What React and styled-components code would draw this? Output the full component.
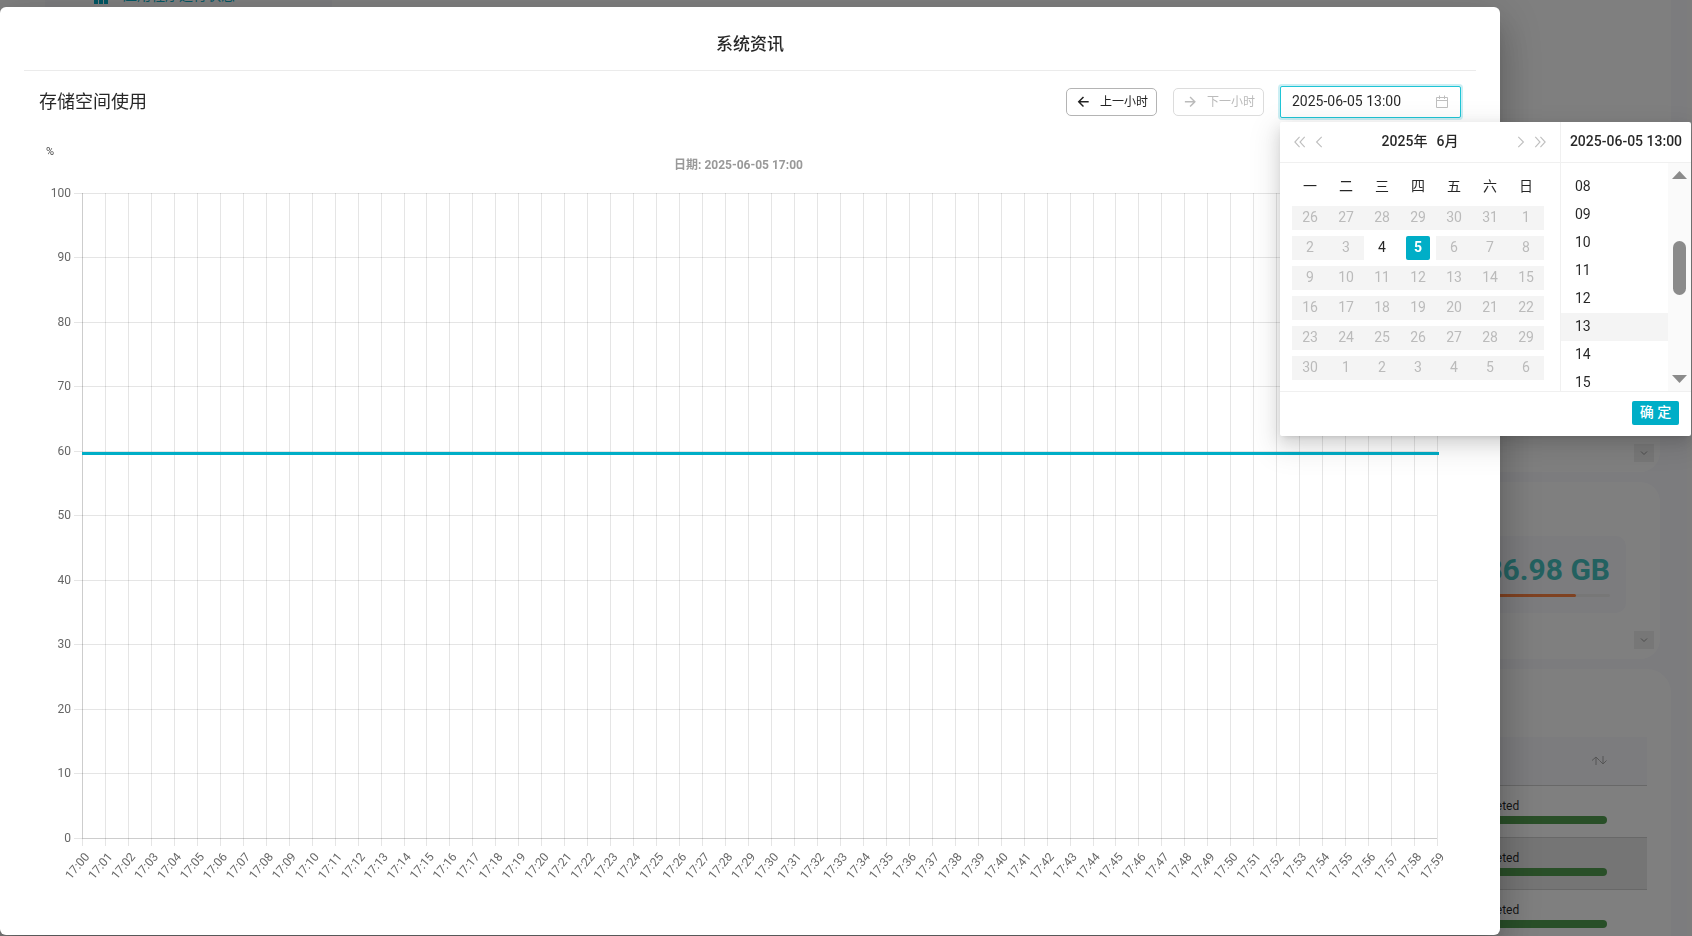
import React, { useLayoutEffect, useRef, useState } from 'react';
import styled, { createGlobalStyle, css } from 'styled-components';

const teal = '#00aec7';
const fontFamily = 'Roboto, "Noto Sans CJK SC", sans-serif';

const GlobalStyle = createGlobalStyle`
  *, *::before, *::after {
    box-sizing: border-box;
  }
  body {
    margin: 0;
    overflow: hidden;
    font-family: ${fontFamily};
    font-size: 14px;
    color: rgba(0, 0, 0, 0.85);
  }
  button, input {
    font-family: inherit;
    margin: 0;
  }
`;

/* ---------- dashboard behind the dialog ---------- */

const Page = styled.div`
  display: flex;
  height: 100vh;
  overflow: hidden;
  background: #f8f8fd;
`;

const Rail = styled.nav`
  flex: 0 0 45px;
  margin-right: 15px;
  background: #fff;
`;

const Menu = styled.aside`
  flex: 0 0 260px;
  margin-right: 12px;
  background: #fff;
`;

const MenuLink = styled.a`
  display: flex;
  align-items: center;
  gap: 15px;
  height: 24px;
  margin-top: -18px;
  padding-left: 34px;
  color: ${teal};
  text-decoration: none;
`;

const Main = styled.main`
  flex: 1;
  display: flex;
  flex-direction: column;
  gap: 10px;
  margin-right: 16px;
`;

const Gutter = styled.div`
  flex: 0 0 5px;
  background: #fafafa;
`;

const Summary = styled.section`
  flex: 0 0 300px;
  background: #fff;
`;

const Card = styled.section`
  flex: 0 0 auto;
  display: flex;
  flex-direction: column;
  align-items: flex-end;
  justify-content: flex-end;
  height: ${props => props.height}px;
  margin-right: 11px;
  padding: 0 6px 10px 0;
  border-radius: 20px;
  background: #fff;
`;

const ExpandButton = styled.button`
  display: flex;
  align-items: center;
  justify-content: center;
  width: 20px;
  height: 18px;
  padding: 0;
  border: 0;
  background: #efefef;
  color: #999;
`;

const Stat = styled.div`
  width: 260px;
  height: 77px;
  margin: 0 28px 18px 0;
  padding: 16px 16px 0;
  border-radius: 10px;
  background: #f8f8fd;
  text-align: right;
`;

const StatValue = styled.div`
  font-size: 30px;
  line-height: 36px;
  font-weight: 700;
  color: #47c2c0;
`;

const StatTrack = styled.div`
  height: 3px;
  margin-top: 6px;
  border-radius: 2px;
  background: #eee;
`;

const StatFill = styled.div`
  height: 3px;
  border-radius: 2px;
  background: #ff8443;
`;

const TableCard = styled.section`
  flex: 1 0 auto;
  display: flex;
  justify-content: flex-end;
  align-items: flex-start;
  padding: 68px 24px 0;
  border-radius: 24px 24px 0 0;
  background: #fff;
`;

const Table = styled.table`
  width: 100%;
  border-collapse: collapse;
  font-size: 12px;

  th {
    height: 48px;
    padding: 0 40px 0 0;
    text-align: right;
    color: #aaa;
    background: #f8f8fd;
    border-bottom: 1px solid #d0d0d0;
  }
  td {
    height: 52px;
    padding: 0 40px 0 0;
    border-bottom: 1px solid #d0d0d0;
    vertical-align: middle;
  }
  tr:nth-child(even) td {
    background: #ebebeb;
  }
`;

const Status = styled.div`
  width: 146px;
  margin-left: auto;
  line-height: 16px;
`;

const StatusBar = styled.div`
  height: 8px;
  margin-top: 2px;
  border-radius: 4px;
  background: #539e50;
`;

/* ---------- dialog ---------- */

const Overlay = styled.div`
  position: fixed;
  inset: 0;
  padding: 7px 192px 1px 0;
  background: rgba(0, 0, 0, 0.5);
`;

const Dialog = styled.div`
  padding: 0 24px 29px;
  border-radius: 6px;
  background: #fff;
  box-shadow: 0 11px 15px -7px rgba(0, 0, 0, 0.2), 0 24px 38px 3px rgba(0, 0, 0, 0.14),
    0 9px 46px 8px rgba(0, 0, 0, 0.12);
`;

const DialogTitle = styled.h2`
  margin: 0;
  padding: 25px 0 14px;
  border-bottom: 1px solid #ebebeb;
  font-size: 17px;
  line-height: 24px;
  font-weight: 500;
  text-align: center;
`;

const Toolbar = styled.div`
  display: flex;
  align-items: center;
  gap: 16px;
  padding: 15px 15px 0;
`;

const SectionTitle = styled.h3`
  flex: 1;
  margin: 0;
  font-size: 18px;
  line-height: 24px;
  font-weight: 400;
`;

const HourButton = styled.button`
  display: flex;
  align-items: center;
  gap: 10px;
  height: 28px;
  width: 91px;
  padding: 0 8px 3px 10px;
  border: 1px solid #b4b4b4;
  border-radius: 5px;
  background: #fff;
  color: #222;
  font-size: 12px;
  white-space: nowrap;

  &:disabled {
    border-color: #dcdcdc;
    color: #bbb;
  }
`;

const PickerWrap = styled.div`
  position: relative;
`;

const PickerField = styled.label`
  display: flex;
  align-items: center;
  width: 181px;
  height: 32px;
  padding: 0 11px;
  border: 1px solid #1fc5d6;
  border-radius: 2px;
  box-shadow: 0 0 0 2px rgba(0, 174, 199, 0.2);
  background: #fff;
  color: #bfbfbf;
`;

const PickerInput = styled.input`
  flex: 1;
  min-width: 0;
  padding: 0 0 2px;
  border: 0;
  outline: 0;
  background: transparent;
  color: rgba(0, 0, 0, 0.85);
  font-size: 14px;
`;

const Popup = styled.div`
  position: absolute;
  z-index: 2;
  top: 36px;
  left: 0;
  width: 411px;
  border-radius: 2px;
  background: #fff;
  box-shadow: 0 3px 6px -4px rgba(0, 0, 0, 0.2), 0 6px 16px rgba(0, 0, 0, 0.12),
    0 9px 28px 8px rgba(0, 0, 0, 0.08);
`;

const Panels = styled.div`
  display: flex;
  border-bottom: 1px solid #f0f0f0;
`;

const DatePanel = styled.div`
  width: 281px;
  border-right: 1px solid #f0f0f0;
`;

const PanelHeader = styled.div`
  display: flex;
  align-items: center;
  height: 41px;
  padding: 0 8px;
  border-bottom: 1px solid #f0f0f0;
  font-weight: 500;
  line-height: 38px;
  white-space: nowrap;
`;

const PanelTitle = styled.div`
  flex: 1;
  display: flex;
  justify-content: center;
  gap: 9px;
  padding-bottom: 3px;
`;

const NavButton = styled.button`
  display: flex;
  align-items: center;
  justify-content: center;
  width: 16px;
  height: 38px;
  padding: 0;
  border: 0;
  background: transparent;
  color: #bfbfbf;

  ${props => props.wide && css`
    width: 24px;
  `}
`;

const Calendar = styled.table`
  width: 252px;
  margin: 8px 16px 8px 12px;
  border-collapse: collapse;
  table-layout: fixed;
  text-align: center;

  th {
    height: 32px;
    padding: 0 0 4px;
    font-weight: 400;
  }
  td {
    height: 30px;
    padding: 3px 0;
  }
`;

const Day = styled.button`
  display: block;
  width: 100%;
  height: 24px;
  padding: 0 0 1px;
  border: 0;
  background: #fff;
  color: rgba(0, 0, 0, 0.85);
  font-size: 14px;
  line-height: 23px;

  &:disabled {
    background: #f4f4f4;
    color: #bbb;
  }
  ${props => props.selected && css`
    width: 24px;
    margin: 0 auto;
    border-radius: 2px;
    background: ${teal};
    color: #fff;
    font-weight: 700;
  `}
`;

const TimePanel = styled.div`
  flex: 1;
`;

const TimeBody = styled.div`
  display: flex;
  height: 228px;
`;

const TimeList = styled.ul`
  flex: 1;
  margin: 0;
  padding: 10px 0 0;
  list-style: none;
  overflow: hidden;
`;

const TimeButton = styled.button`
  display: block;
  width: 100%;
  height: 28px;
  padding: 0 0 1px 14px;
  border: 0;
  background: ${props => (props.selected ? '#f4f4f4' : 'transparent')};
  color: rgba(0, 0, 0, 0.85);
  font-size: 14px;
  line-height: 27px;
  text-align: left;
`;

const ScrollTrack = styled.div`
  display: flex;
  flex-direction: column;
  align-items: center;
  width: 23px;
  padding: 8px 0;
  background: #fafafa;
  color: #8b8b8b;
`;

const ScrollThumb = styled.div`
  width: 13px;
  height: 54px;
  margin: 62px 0 auto;
  border-radius: 7px;
  background: #8b8b8b;
`;

const PopupFooter = styled.div`
  display: flex;
  justify-content: flex-end;
  padding: 9px 12px 11px;
`;

const OkButton = styled.button`
  height: 24px;
  width: 47px;
  padding: 0 0 2px;
  border: 0;
  border-radius: 2px;
  background: ${teal};
  color: #fff;
  font-size: 14px;
  font-weight: 500;
  line-height: 22px;
`;

const ChartBox = styled.div`
  margin: 20px 15px 0;

  svg {
    display: block;
    width: 100%;
    height: 768px;
  }
  text {
    font-family: ${fontFamily};
    font-size: 12px;
    fill: #666;
  }
`;

/* ---------- icons ---------- */

const paths = {
  left: ['M9 1 3 7 9 13'],
  dleft: ['M6.500 1 1 7 6.500 13', 'M12.500 1 7 7 12.500 13'],
  right: ['M5 1 11 7 5 13'],
  dright: ['M1.500 1 7 7 1.500 13', 'M7.500 1 13 7 7.500 13'],
};

const Chevron = ({ kind }) => (
  <svg width="12" height="12" viewBox="0 0 14 14" fill="none" stroke="currentColor" strokeWidth="1.300">
    {paths[kind].map(d => <path key={d} d={d} />)}
  </svg>
);

const Arrow = ({ back }) => (
  <svg width="15" height="15" viewBox="0 0 15 15" fill="none" stroke="currentColor" strokeWidth="1.700">
    {back
      ? <path d="M13.500 9H2M7.500 3.500 2 9 7.500 14.500" />
      : <path d="M1 9h11.500M7 3.500 12.500 9 7 14.500" />}
  </svg>
);

const CalendarIcon = () => (
  <svg width="14" height="14" viewBox="0 0 14 14" fill="none" stroke="currentColor">
    <path d="M1.500 2.500h11v10h-11zM1.500 5.500h11M4.500 0.500v3.500M9.500 0.500v3.500" />
  </svg>
);

const Triangle = ({ down }) => (
  <svg width="15" height="8" viewBox="0 0 15 8" fill="currentColor">
    <path d={down ? 'M0 0h15L7.500 8z' : 'M0 8h15L7.500 0z'} />
  </svg>
);

const Expand = () => (
  <ExpandButton aria-label="展开">
    <svg width="8" height="8" viewBox="0 0 8 8" fill="none" stroke="currentColor">
      <path d="M1 2.500 4 5.500 7 2.500" />
    </svg>
  </ExpandButton>
);

/* ---------- chart ---------- */

const plot = { left: 43, top: 55, bottom: 700, insetRight: 24 };
const minutes = Array.from({ length: 60 }, (_, i) => `17:${String(i).padStart(2, '0')}`);
const usage = 59.6;

// keep the 1px grid lines on whole pixels
const crisp = n => Math.round(n) + 0.5;

const UsageChart = () => {
  const box = useRef(null);
  const [width, setWidth] = useState(1422);

  useLayoutEffect(() => {
    const measure = () => setWidth(box.current.clientWidth);
    measure();
    window.addEventListener('resize', measure);
    return () => window.removeEventListener('resize', measure);
  }, []);

  const right = width - plot.insetRight;
  const x = i => plot.left + (i * (right - plot.left)) / (minutes.length - 1);
  const y = v => plot.bottom - (v * (plot.bottom - plot.top)) / 100;

  return (
    <ChartBox>
      <div ref={box}>
        <svg role="img" aria-label="存储空间使用">
          <text x="7" y="17" style={{ fontSize: 11, fill: '#444' }}>%</text>
          <text x={(plot.left + right) / 2 - 21} y="31" textAnchor="middle" style={{ fontWeight: 700, fill: '#999' }}>
            日期: 2025-06-05 17:00
          </text>
          <g stroke="#000" strokeOpacity="0.1">
            {minutes.map((m, i) => (
              <line key={m} x1={crisp(x(i))} x2={crisp(x(i))} y1={plot.top} y2={plot.bottom + 8} />
            ))}
            {Array.from({ length: 11 }, (_, i) => i * 10).map(v => (
              <line key={v} x1={plot.left - 8} x2={right} y1={Math.floor(y(v)) + 0.5} y2={Math.floor(y(v)) + 0.5} />
            ))}
            <path d={`M${plot.left + 0.5} ${plot.top}V${plot.bottom + 0.5}H${right}`} fill="none" />
          </g>
          {Array.from({ length: 11 }, (_, i) => i * 10).map(v => (
            <text key={v} x={plot.left - 11} y={Math.floor(y(v)) + 4} textAnchor="end">{v}</text>
          ))}
          {minutes.map((m, i) => (
            <text key={m} textAnchor="end" transform={`translate(${x(i) + 8} ${plot.bottom + 19}) rotate(-50)`}>
              {m}
            </text>
          ))}
          <line x1={x(0)} x2={right + 2} y1={y(usage)} y2={y(usage)} stroke={teal} strokeWidth="3" />
        </svg>
      </div>
    </ChartBox>
  );
};

/* ---------- date picker ---------- */

const weekdays = ['一', '二', '三', '四', '五', '六', '日'];
const weeks = [
  [26, 27, 28, 29, 30, 31, 1],
  [2, 3, 4, 5, 6, 7, 8],
  [9, 10, 11, 12, 13, 14, 15],
  [16, 17, 18, 19, 20, 21, 22],
  [23, 24, 25, 26, 27, 28, 29],
  [30, 1, 2, 3, 4, 5, 6],
];
const hours = ['08', '09', '10', '11', '12', '13', '14', '15'];

// only yesterday and today have data
const isOpen = (week, day) => week === 1 && (day === 4 || day === 5);

const DatePopup = () => {
  const [day, setDay] = useState(5);
  const [hour, setHour] = useState('13');

  return (
    <Popup>
      <Panels>
        <DatePanel>
          <PanelHeader>
            <NavButton wide aria-label="上一年"><Chevron kind="dleft" /></NavButton>
            <NavButton aria-label="上个月"><Chevron kind="left" /></NavButton>
            <PanelTitle><span>2025年</span><span>6月</span></PanelTitle>
            <NavButton aria-label="下个月"><Chevron kind="right" /></NavButton>
            <NavButton wide aria-label="下一年"><Chevron kind="dright" /></NavButton>
          </PanelHeader>
          <Calendar>
            <thead>
              <tr>{weekdays.map(d => <th key={d}>{d}</th>)}</tr>
            </thead>
            <tbody>
              {weeks.map((week, w) => (
                <tr key={w}>
                  {week.map(d => (
                    <td key={d}>
                      <Day disabled={!isOpen(w, d)} selected={w === 1 && d === day} onClick={() => setDay(d)}>
                        {d}
                      </Day>
                    </td>
                  ))}
                </tr>
              ))}
            </tbody>
          </Calendar>
        </DatePanel>
        <TimePanel>
          <PanelHeader><PanelTitle>2025-06-05 13:00</PanelTitle></PanelHeader>
          <TimeBody>
            <TimeList>
              {hours.map(h => (
                <li key={h}>
                  <TimeButton selected={h === hour} onClick={() => setHour(h)}>{h}</TimeButton>
                </li>
              ))}
            </TimeList>
            <ScrollTrack>
              <Triangle />
              <ScrollThumb />
              <Triangle down />
            </ScrollTrack>
          </TimeBody>
        </TimePanel>
      </Panels>
      <PopupFooter>
        <OkButton>确 定</OkButton>
      </PopupFooter>
    </Popup>
  );
};

const Dashboard = () => (
  <Page>
    <Rail />
    <Menu>
      <MenuLink href="#status">
        <svg width="14" height="20" viewBox="0 0 14 20" fill="currentColor">
          <path d="M0 10h4v10H0zM5 6h4v14H5zM10 2h4v18h-4z" />
        </svg>
        应用程序运行状态
      </MenuLink>
    </Menu>
    <Main>
      <Summary />
      <Card height={162}>
        <Expand />
      </Card>
      <Card height={177}>
        <Stat>
          <StatValue>86.98 GB</StatValue>
          <StatTrack><StatFill style={{ width: '85%' }} /></StatTrack>
        </Stat>
        <Expand />
      </Card>
      <TableCard>
        <Table>
          <thead>
            <tr>
              <th>
                <svg width="16" height="9" viewBox="0 0 16 9" fill="none" stroke="currentColor">
                  <path d="M5 9V1M1 4.500 5 1l3.500 3.500M12 0v8M8.500 4.500 12 8l3.500-3.500" />
                </svg>
              </th>
            </tr>
          </thead>
          <tbody>
            {[1, 2, 3].map(id => (
              <tr key={id}>
                <td><Status>Completed<StatusBar /></Status></td>
              </tr>
            ))}
          </tbody>
        </Table>
      </TableCard>
    </Main>
    <Gutter />
  </Page>
);

export default function App() {
  const [value, setValue] = useState('2025-06-05 13:00');

  return (
    <>
      <GlobalStyle />
      <Dashboard />
      <Overlay>
        <Dialog role="dialog" aria-labelledby="dialog-title">
          <DialogTitle id="dialog-title">系统资讯</DialogTitle>
          <Toolbar>
            <SectionTitle>存储空间使用</SectionTitle>
            <HourButton><Arrow back />上一小时</HourButton>
            <HourButton disabled><Arrow />下一小时</HourButton>
            <PickerWrap>
              <PickerField>
                <PickerInput aria-label="日期" value={value} onChange={e => setValue(e.target.value)} />
                <CalendarIcon />
              </PickerField>
              <DatePopup />
            </PickerWrap>
          </Toolbar>
          <UsageChart />
        </Dialog>
      </Overlay>
    </>
  );
}
